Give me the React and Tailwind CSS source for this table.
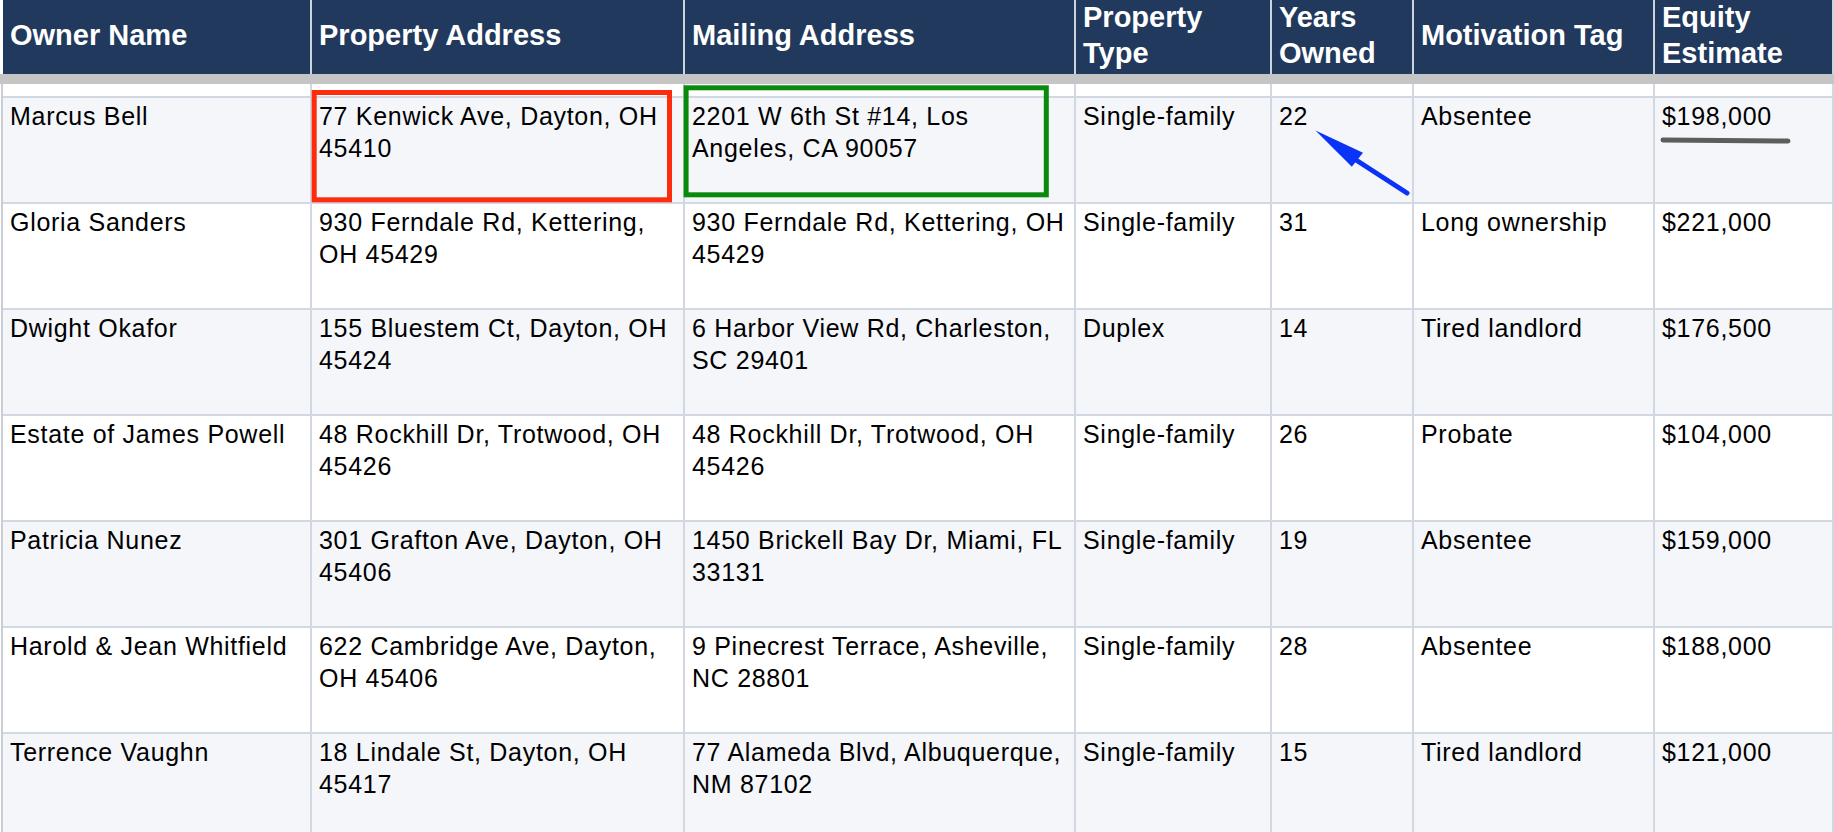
const columns = [
  "Owner Name",
  "Property Address",
  "Mailing Address",
  "Property Type",
  "Years Owned",
  "Motivation Tag",
  "Equity Estimate",
];

const rows = [
  ["Marcus Bell", "77 Kenwick Ave, Dayton, OH\n45410", "2201 W 6th St #14, Los\nAngeles, CA 90057", "Single-family", "22", "Absentee", "$198,000"],
  ["Gloria Sanders", "930 Ferndale Rd, Kettering,\nOH 45429", "930 Ferndale Rd, Kettering, OH\n45429", "Single-family", "31", "Long ownership", "$221,000"],
  ["Dwight Okafor", "155 Bluestem Ct, Dayton, OH\n45424", "6 Harbor View Rd, Charleston,\nSC 29401", "Duplex", "14", "Tired landlord", "$176,500"],
  ["Estate of James Powell", "48 Rockhill Dr, Trotwood, OH\n45426", "48 Rockhill Dr, Trotwood, OH\n45426", "Single-family", "26", "Probate", "$104,000"],
  ["Patricia Nunez", "301 Grafton Ave, Dayton, OH\n45406", "1450 Brickell Bay Dr, Miami, FL\n33131", "Single-family", "19", "Absentee", "$159,000"],
  ["Harold & Jean Whitfield", "622 Cambridge Ave, Dayton,\nOH 45406", "9 Pinecrest Terrace, Asheville,\nNC 28801", "Single-family", "28", "Absentee", "$188,000"],
  ["Terrence Vaughn", "18 Lindale St, Dayton, OH\n45417", "77 Alameda Blvd, Albuquerque,\nNM 87102", "Single-family", "15", "Tired landlord", "$121,000"],
];

const gridCols = "grid grid-cols-[309px_373px_391px_196px_142px_241px_1fr]";

const Annotations = () => (
  <svg className="absolute inset-0 pointer-events-none" width="1834" height="832" viewBox="0 0 1834 832">
    {/* red box on property address */}
    <rect x="314.2" y="92.5" width="355.3" height="107.3" fill="none" stroke="#fe2c0c" strokeWidth="5" />
    {/* green box on mailing address */}
    <rect x="686.1" y="87.8" width="360.2" height="107" fill="none" stroke="#0a8a0c" strokeWidth="5" />
    {/* blue arrow pointing at years owned */}
    <line x1="1356" y1="160" x2="1407" y2="193" stroke="#0b33f5" strokeWidth="5" strokeLinecap="round" />
    <polygon points="1315.5,130.5 1363,152.7 1351.8,166.7" fill="#0b33f5" />
    {/* pen underline under equity */}
    <line x1="1663" y1="140" x2="1788" y2="141" stroke="#5d5d5d" strokeWidth="5" strokeLinecap="round" />
  </svg>
);

export default function App() {
  return (
    <div className="relative w-[1834px] h-[832px] overflow-hidden bg-white font-['Liberation_Sans',Arial,sans-serif]">
      {/* header */}
      <div className={`${gridCols} ml-[3px] bg-[#21395c]`}>
        {columns.map((c) => (
          <div
            key={c}
            className="flex items-center h-[74px] pb-[4px] pl-[7px] pr-2 border-r-2 border-[#cdd3dc] text-white font-bold text-[29px] leading-[36px]"
          >
            {c}
          </div>
        ))}
      </div>

      {/* frozen row divider */}
      <div className="h-[10px] bg-[#c5c5c5]" />

      <div className={`${gridCols} ml-px border-l-2 border-[#c9ced6]`}>
        {columns.map((c) => (
          <div key={"s-" + c} className="h-[14px] bg-white border-r-2 border-b-2 border-[#d2d8e2]" />
        ))}

        {rows.map((row, i) =>
          row.map((cell, j) => (
            <div
              key={i + "-" + j}
              className={`h-[106px] border-r-2 border-b-2 border-[#d2d8e2] pl-[7px] pt-[2px] text-[25px] leading-[32px] tracking-[0.7px] whitespace-pre text-black ${
                i % 2 === 0 ? "bg-[#f4f6fa]" : "bg-white"
              }`}
            >
              {cell}
            </div>
          ))
        )}
      </div>

      <Annotations />
    </div>
  );
}
